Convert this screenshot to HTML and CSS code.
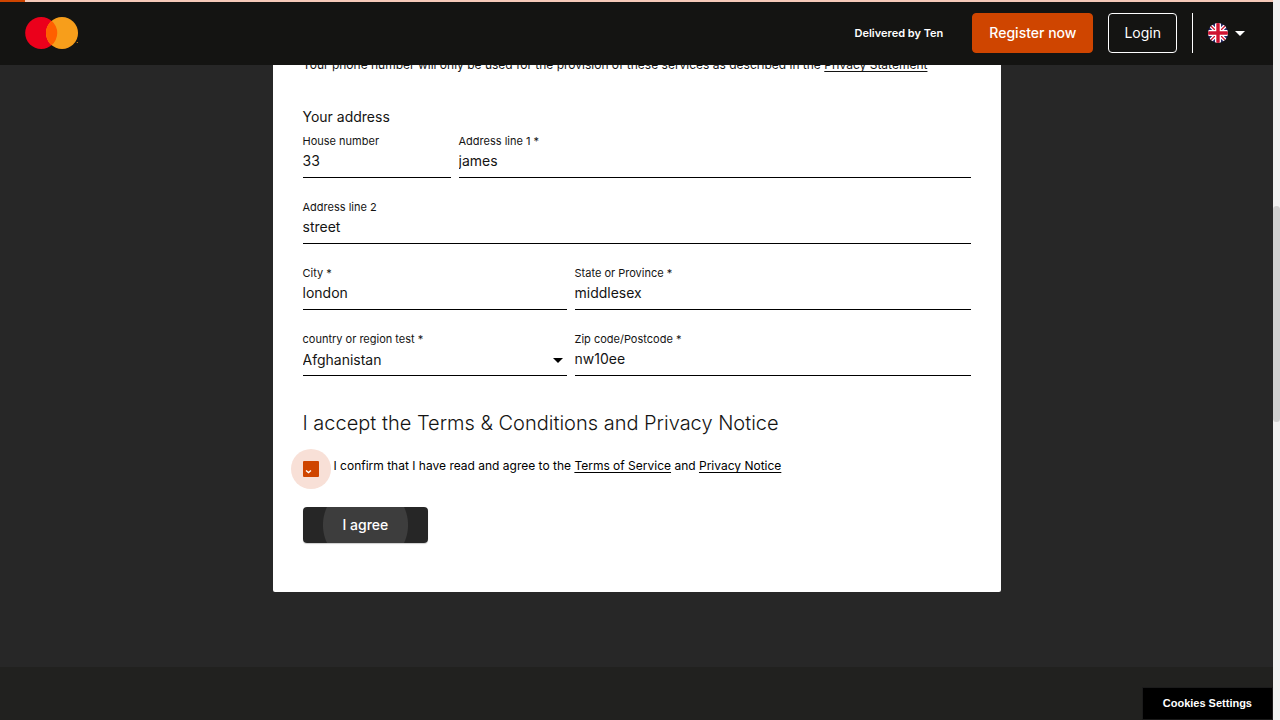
FILE: index.html
```html
<!DOCTYPE html>
<html lang="en">
<head>
<meta charset="utf-8">
<meta name="viewport" content="width=device-width, initial-scale=1">
<title>Register</title>
<link rel="stylesheet" href="styles.css">
</head>
<body>
<div class="window">
  <div class="page">
    <header class="header">
      <div class="progress"><div class="progress-value"></div></div>
      <div class="header-bar">
        <a class="logo" href="#" aria-label="Home">
          <svg width="54" height="32" viewBox="0 0 54 32">
            <circle cx="16.2" cy="16" r="16" fill="#eb001b"/>
            <circle cx="37" cy="16" r="16" fill="#f79e1b"/>
            <path d="M26.6 3.8a16 16 0 0 1 0 24.400a16 16 0 0 1 0-24.400z" fill="#ff5f00"/>
            <circle cx="52.300" cy="25.500" r=".6" fill="#f79e1b"/>
          </svg>
        </a>
        <span class="delivered">Delivered by Ten</span>
        <button class="btn btn-primary" type="button">Register now</button>
        <button class="btn btn-outline" type="button">Login</button>
        <button class="language" type="button" aria-label="Language: English">
          <svg width="20" height="20" viewBox="0 0 20 20">
            <clipPath id="round"><circle cx="10" cy="10" r="10"/></clipPath>
            <g clip-path="url(#round)">
              <path fill="#26286b" d="M0 0h20v20H0z"/>
              <path d="M0 0l20 20M20 0L0 20" stroke="#fff" stroke-width="4"/>
              <path d="M0 0l20 20M20 0L0 20" stroke="#cf1230" stroke-width="1.300"/>
              <path d="M10 0v20M0 10h20" stroke="#fff" stroke-width="6"/>
              <path d="M10 0v20M0 10h20" stroke="#cf1230" stroke-width="3.400"/>
            </g>
          </svg>
          <svg width="10" height="5" viewBox="0 0 10 5"><path d="M0 0h10L5 5z" fill="#fff"/></svg>
        </button>
      </div>
    </header>

    <main class="main">
      <form class="card">
        <p class="note">Your phone number will only be used for the provision of these services as described in the <a href="#">Privacy Statement</a></p>
        <h3 class="subtitle">Your address</h3>
        <div class="fields">
          <div class="row row-street">
            <div class="field"><label for="house">House number</label><input id="house" type="text" value="33"></div>
            <div class="field"><label for="line1">Address line 1 *</label><input id="line1" type="text" value="james"></div>
          </div>
          <div class="row">
            <div class="field"><label for="line2">Address line 2</label><input id="line2" type="text" value="street"></div>
          </div>
          <div class="row row-region">
            <div class="field"><label for="city">City *</label><input id="city" type="text" value="london"></div>
            <div class="field"><label for="state">State or Province *</label><input id="state" type="text" value="middlesex"></div>
          </div>
          <div class="row row-region">
            <div class="field field-select"><label for="country">country or region test *</label>
              <select id="country"><option>Afghanistan</option></select>
              <svg class="caret" width="10" height="5" viewBox="0 0 10 5"><path d="M0 0h10L5 5z"/></svg>
            </div>
            <div class="field"><label for="zip">Zip code/Postcode *</label><input id="zip" type="text" value="nw10ee"></div>
          </div>
        </div>
        <h2 class="title">I accept the Terms &amp; Conditions and Privacy Notice</h2>
        <div class="consent">
          <span class="check">
            <input id="agree" type="checkbox" checked>
            <svg class="tick" width="16" height="16" viewBox="0 0 16 16"><path d="M3 9.500l2.500 2L8 9.500" fill="none" stroke="#fff" stroke-width="1.400"/></svg>
          </span>
          <label for="agree">I confirm that I have read and agree to the <a href="#">Terms of Service</a> and <a href="#">Privacy Notice</a></label>
        </div>
        <button class="submit" type="button">I agree</button>
      </form>
    </main>

    <footer class="footer"></footer>
    <button class="cookies" type="button">Cookies Settings</button>
  </div>
  <div class="scrollbar"><div class="thumb"></div></div>
</div>
</body>
</html>
```
FILE: styles.css
```css
* { box-sizing: border-box; }

body {
  margin: 0;
  font-family: Inter, "Liberation Sans", sans-serif;
  color: #141413;
}

button, input, select { font-family: inherit; color: inherit; }
button { cursor: pointer; }
a { color: inherit; text-underline-offset: 2px; }

.window { display: flex; height: 100vh; background: #272727; }

.page {
  position: relative;
  flex: 1;
  min-width: 0;
  display: flex;
  flex-direction: column;
}

.header { background: #141412; }
.progress { height: 2px; background: #f5c9b8; }
.progress-value { width: 2%; height: 2px; background: #cf4500; }

.header-bar {
  display: flex;
  align-items: center;
  padding: 11px 28px 12px 25px;
  color: #fff;
}

.logo { display: flex; margin-right: auto; }
.delivered { margin-right: 29px; font-size: 11px; font-weight: 600; }

.btn {
  height: 40px;
  padding: 0 15px 2px;
  border: 1px solid #cf4500;
  border-radius: 4px;
  font-size: 14px;
  color: #fff;
}
.btn-primary { margin-right: 15px; padding: 0 16px 2px; background: #cf4500; font-weight: 500; }
.btn-outline { margin-right: 15px; border-color: #fff; background: transparent; }

.language {
  display: flex;
  align-items: center;
  gap: 7px;
  height: 40px;
  padding: 0 0 0 15px;
  border: 0;
  border-left: 1px solid #fff;
  background: transparent;
}

.main {
  flex: 1;
  min-height: 0;
  overflow: hidden;
  display: flex;
  flex-direction: column;
  justify-content: flex-end;
  padding-bottom: 75px;
}

.card {
  width: 100%;
  max-width: 728px;
  margin: 0 auto;
  padding: 30px 30px 49px;
  border-radius: 2px;
  background: #fff;
}

.note { margin: 0 0 33px; font-size: 12px; line-height: 18px; }
.subtitle { margin: 0 0 7px; font-size: 14px; font-weight: 400; line-height: 20px; }

.fields { display: grid; gap: 22px; }
.row { display: grid; column-gap: 8px; }
.row-street { grid-template-columns: 148fr 512fr; }
.row-region { grid-template-columns: 264fr 396fr; }

.field { position: relative; display: flex; flex-direction: column; min-width: 0; }
.field label { font-size: 11px; line-height: 14px; }
.field input, .field select {
  width: 100%;
  height: 30px;
  padding: 0 0 5px;
  border: 0;
  border-bottom: 1px solid #000;
  border-radius: 0;
  background: transparent;
  font-size: 14px;
  appearance: none;
}
.field select { padding-bottom: 3px; }
.caret { position: absolute; right: 4px; bottom: 13px; pointer-events: none; }

.title { margin: 33px 0 12px; font-size: 20px; font-weight: 300; line-height: 28px; }

.consent { display: flex; align-items: center; gap: 3px; margin: 0 0 18px -12px; }
.consent label { padding-bottom: 6px; font-size: 12px; line-height: 18px; color: #000; }

.check {
  position: relative;
  display: grid;
  place-items: center;
  width: 40px;
  height: 40px;
  border-radius: 50%;
  background: #f8e0d7;
}
.check input {
  width: 16px;
  height: 16px;
  margin: 0;
  border-radius: 1px;
  background: #cf4500;
  appearance: none;
}
.tick { position: absolute; pointer-events: none; }

.submit {
  display: block;
  height: 36px;
  padding: 0 40px 2px;
  border: 0;
  border-radius: 4px;
  background: radial-gradient(circle at 50% 50%, #3d3d3d 42px, #262626 43px);
  box-shadow: 0 1px 1px #0003;
  font-size: 14px;
  font-weight: 500;
  color: #fff;
}

.footer { flex: 0 0 53px; background: #21211f; }

.cookies {
  position: absolute;
  right: 0;
  bottom: 0;
  height: 33px;
  padding: 0 20px 2px;
  border: 1px solid #1b1b1b;
  background: #000;
  font-family: "Liberation Sans", sans-serif;
  font-size: 11px;
  font-weight: 700;
  color: #fff;
}

.scrollbar { flex: 0 0 7px; background: #f1f1f1; }
.thumb { height: 30%; margin-top: 206px; border-radius: 4px; background: #d1d1d1; }
```
